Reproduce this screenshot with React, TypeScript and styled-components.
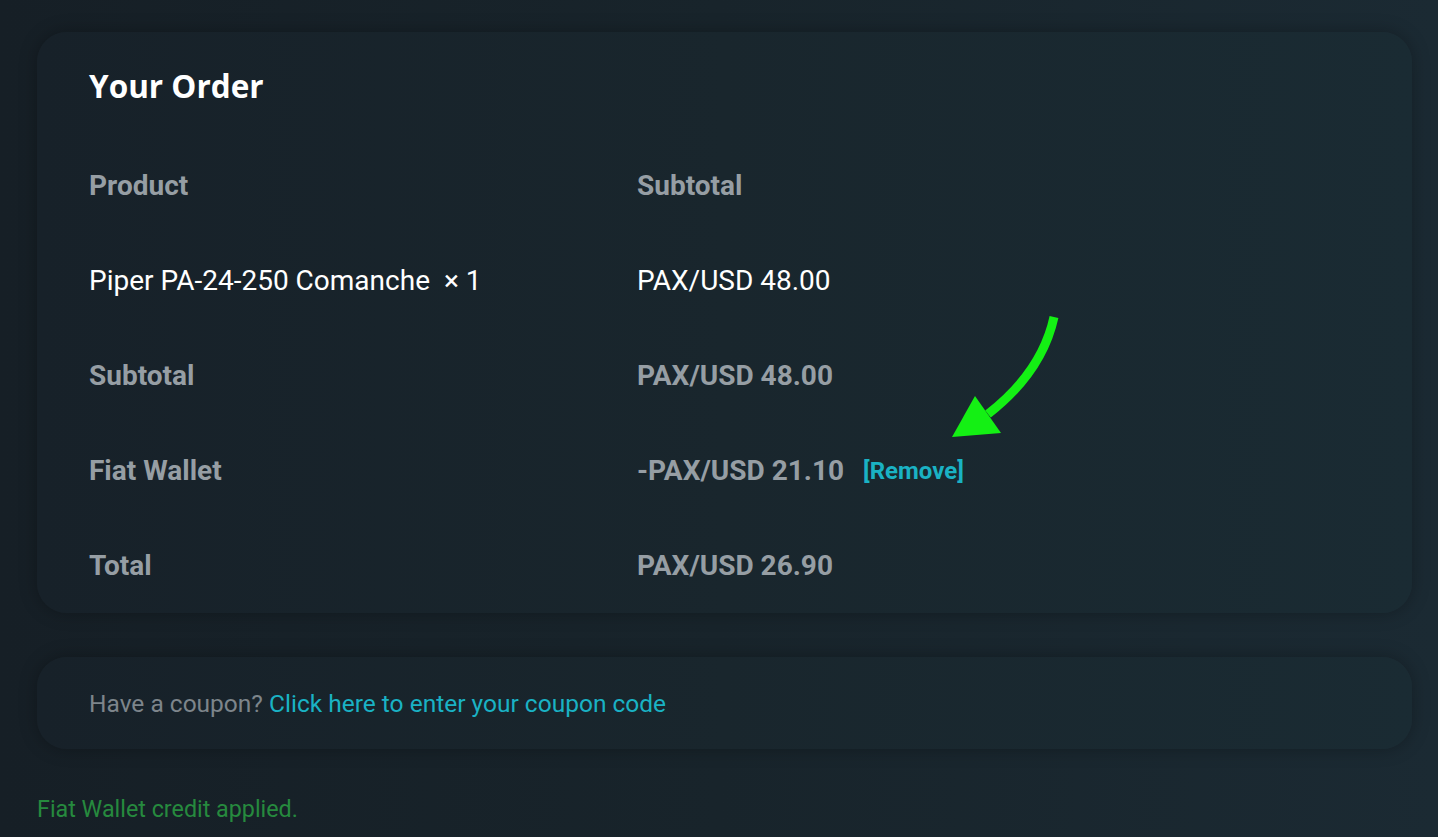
import React from 'react'
import styled, { createGlobalStyle } from 'styled-components'

const GlobalStyle = createGlobalStyle`
	html, body {
		margin: 0;
		padding: 0;
		background: linear-gradient(90deg, #161f26 0%, #18242b 50%, #1b2a33 100%);
		min-height: 100%;
	}
	body {
		font-family: Roboto, 'Liberation Sans', sans-serif;
	}
`

const Page = styled.div`
	position: relative;
	width: 1438px;
	height: 837px;
	box-sizing: border-box;
	padding: 32px 26px 0 37px;
	overflow: hidden;
	background: linear-gradient(90deg, #161f26 0%, #18242b 50%, #1b2a33 100%);
`

const Panel = styled.section<{ $compact?: boolean }>`
	box-sizing: border-box;
	border-radius: 30px;
	background: linear-gradient(90deg, #172129 0%, #19262d 50%, #1a2b33 100%);
	box-shadow: 0 0 18px rgba(0, 0, 0, 0.28);
	padding: ${(p) => (p.$compact ? '0 52px' : '32px 52px 0')};
	${(p) => p.$compact && 'height: 92px; display: flex; align-items: center; margin-top: 44px;'}
`

const Title = styled.h3`
	margin: 0 0 30px;
	font-family: 'Open Sans', sans-serif;
	font-weight: 700;
	font-size: 31.5px;
	line-height: 44px;
	color: #ffffff;
`

const Table = styled.div`
	display: grid;
	grid-template-columns: 548px 1fr;
`

const Cell = styled.div<{ $bold?: boolean; $light?: boolean }>`
	height: 95px;
	display: flex;
	align-items: center;
	font-size: 28px;
	font-weight: ${(p) => (p.$bold ? 700 : 400)};
	color: ${(p) => (p.$light ? '#ffffff' : '#969ea4')};
	white-space: pre;
`

const RemoveLink = styled.a`
	margin-left: 19px;
	font-size: 24px;
	font-weight: 700;
	color: #1ab2c4;
	text-decoration: none;
	cursor: pointer;
`

const CouponText = styled.div`
	font-size: 24.5px;
	color: #7d858b;
`

const CouponLink = styled.a`
	color: #1ab2c4;
	text-decoration: none;
	cursor: pointer;
`

const Notice = styled.div`
	margin-top: 46px;
	font-size: 23.3px;
	line-height: 28px;
	color: #268a3e;
`

const Arrow = styled.svg`
	position: absolute;
	left: 940px;
	top: 300px;
	width: 130px;
	height: 150px;
	pointer-events: none;
`

const rows: { label: string; value: string; item?: boolean; remove?: boolean }[] = [
	{ label: 'Piper PA-24-250 Comanche  × 1', value: 'PAX/USD 48.00', item: true },
	{ label: 'Subtotal', value: 'PAX/USD 48.00' },
	{ label: 'Fiat Wallet', value: '-PAX/USD 21.10', remove: true },
	{ label: 'Total', value: 'PAX/USD 26.90' },
]

export default function App() {
	return (
		<>
			<GlobalStyle />
			<Page>
				<Panel>
					<Title>Your Order</Title>
					<Table>
						<Cell $bold>Product</Cell>
						<Cell $bold>Subtotal</Cell>
						{rows.map((r) => (
							<React.Fragment key={r.label}>
								<Cell $bold={!r.item} $light={r.item}>
									{r.label}
								</Cell>
								<Cell $bold={!r.item} $light={r.item}>
									{r.value}
									{r.remove && <RemoveLink>[Remove]</RemoveLink>}
								</Cell>
							</React.Fragment>
						))}
					</Table>
				</Panel>
				<Panel $compact>
					<CouponText>
						Have a coupon? <CouponLink>Click here to enter your coupon code</CouponLink>
					</CouponText>
				</Panel>
				<Notice>Fiat Wallet credit applied.</Notice>
				<Arrow viewBox="0 0 130 150">
					<path d="M114 17 Q102 72 48 114" fill="none" stroke="#14f014" strokeWidth="9" />
					<polygon points="35,96 61,133 12,137" fill="#14f014" />
				</Arrow>
			</Page>
		</>
	)
}
